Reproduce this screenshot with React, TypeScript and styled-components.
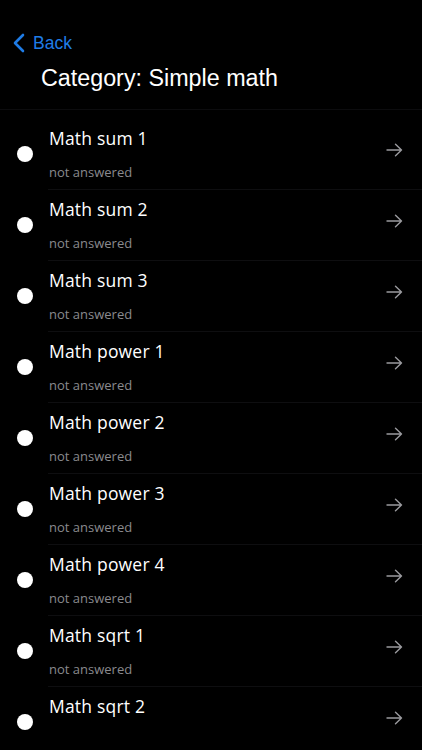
import React from 'react'
import styled, { createGlobalStyle } from 'styled-components'

const GlobalStyle = createGlobalStyle`
  html, body {
    margin: 0;
    padding: 0;
    background: #000;
  }
  body {
    font-family: "Open Sans", "Liberation Sans", sans-serif;
    -webkit-font-smoothing: antialiased;
  }
`

const Screen = styled.div`
  width: 422px;
  height: 750px;
  overflow: hidden;
  background: #000;
  color: #fff;
  display: flex;
  flex-direction: column;
`

const Header = styled.div`
  padding-top: 31px;
  border-bottom: 1px solid #0c0c0e;
  height: 110px;
  box-sizing: border-box;
  flex-shrink: 0;
`

const BackButton = styled.div`
  display: flex;
  align-items: center;
  gap: 8px;
  padding-left: 13px;
  height: 24px;
  color: #1f7ce6;
  font-family: "Liberation Sans", Arial, sans-serif;
  font-size: 17.5px;
`

const Title = styled.h1`
  margin: 10px 0 0 41px;
  font-family: "Liberation Sans", Arial, sans-serif;
  font-weight: 400;
  font-size: 23.3px;
  line-height: 26px;
`

const List = styled.div`
  padding-top: 9px;
`

const Row = styled.div`
  display: flex;
  height: 71px;
`

const Dot = styled.div`
  width: 16px;
  height: 16px;
  border-radius: 50%;
  background: #fff;
  margin: 27px 15px 0 17px;
  flex-shrink: 0;
`

const Body = styled.div<{ $last?: boolean }>`
  flex: 1;
  display: flex;
  border-bottom: ${(p) => (p.$last ? 'none' : '1px solid #0e0e10')};
`

const Texts = styled.div`
  flex: 1;
  padding-left: 1px;
`

const ItemTitle = styled.div`
  font-size: 17.5px;
  line-height: 24px;
  margin-top: 7px;
  letter-spacing: 0.2px;
`

const ItemSub = styled.div`
  font-size: 13px;
  line-height: 16px;
  margin-top: 14px;
  color: #8a8a8e;
`

const Arrow = styled.div`
  width: 17px;
  margin: 21px 19px 0 0;
  color: #9a9a9e;
`

const items = [
  'Math sum 1',
  'Math sum 2',
  'Math sum 3',
  'Math power 1',
  'Math power 2',
  'Math power 3',
  'Math power 4',
  'Math sqrt 1',
  'Math sqrt 2',
]

export default function App() {
  return (
    <Screen>
      <GlobalStyle />
      <Header>
        <BackButton>
          <svg width="12" height="20" viewBox="0 0 12 20">
            <path d="M10 2 L2 10 L10 18" fill="none" stroke="currentColor" strokeWidth="2.6" strokeLinecap="round" strokeLinejoin="round" />
          </svg>
          <span>Back</span>
        </BackButton>
        <Title>Category: Simple math</Title>
      </Header>
      <List>
        {items.map((name, i) => (
          <Row key={name}>
            <Dot />
            <Body $last={i === items.length - 1}>
              <Texts>
                <ItemTitle>{name}</ItemTitle>
                {i < items.length - 1 && <ItemSub>not answered</ItemSub>}
              </Texts>
              <Arrow>
                <svg width="17" height="14" viewBox="0 0 17 14">
                  <path d="M1 7 H15.5 M9.5 1.2 L15.5 7 L9.5 12.8" fill="none" stroke="currentColor" strokeWidth="1.4" strokeLinecap="round" strokeLinejoin="round" />
                </svg>
              </Arrow>
            </Body>
          </Row>
        ))}
      </List>
    </Screen>
  )
}
